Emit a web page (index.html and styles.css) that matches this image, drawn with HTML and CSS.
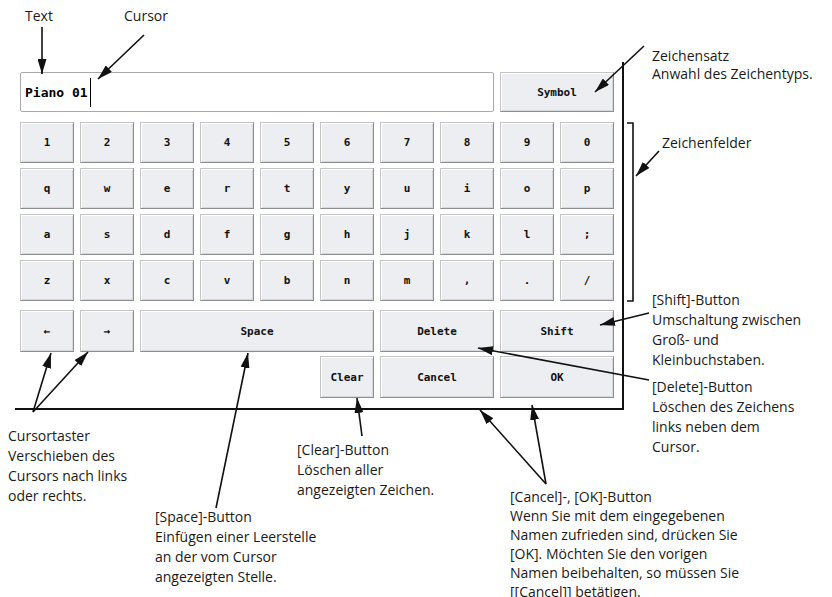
FILE: index.html
```html
<!DOCTYPE html>
<html lang="de">
<head>
    <meta charset="UTF-8">
    <title>Texteingabe</title>
    <link rel="stylesheet" href="styles.css">
</head>
<body>
    <div class="stage">
        <div class="frame">
            <div class="entry-row">
                <div class="entry">
                    <span class="entry-text">Piano 01</span><span class="caret"></span>
                </div>
                <button class="key wide">Symbol</button>
            </div>

            <div class="keys">
                <button class="key">1</button>
                <button class="key">2</button>
                <button class="key">3</button>
                <button class="key">4</button>
                <button class="key">5</button>
                <button class="key">6</button>
                <button class="key">7</button>
                <button class="key">8</button>
                <button class="key">9</button>
                <button class="key">0</button>

                <button class="key">q</button>
                <button class="key">w</button>
                <button class="key">e</button>
                <button class="key">r</button>
                <button class="key">t</button>
                <button class="key">y</button>
                <button class="key">u</button>
                <button class="key">i</button>
                <button class="key">o</button>
                <button class="key">p</button>

                <button class="key">a</button>
                <button class="key">s</button>
                <button class="key">d</button>
                <button class="key">f</button>
                <button class="key">g</button>
                <button class="key">h</button>
                <button class="key">j</button>
                <button class="key">k</button>
                <button class="key">l</button>
                <button class="key">;</button>

                <button class="key">z</button>
                <button class="key">x</button>
                <button class="key">c</button>
                <button class="key">v</button>
                <button class="key">b</button>
                <button class="key">n</button>
                <button class="key">m</button>
                <button class="key">,</button>
                <button class="key">.</button>
                <button class="key">/</button>
            </div>

            <div class="controls">
                <button class="key">&larr;</button>
                <button class="key">&rarr;</button>
                <button class="key space">Space</button>
                <button class="key wide">Delete</button>
                <button class="key wide">Shift</button>

                <button class="key clear">Clear</button>
                <button class="key wide">Cancel</button>
                <button class="key wide">OK</button>
            </div>
        </div>

        <!-- callout arrows -->
        <svg class="arrows" width="832" height="597" viewBox="0 0 832 597">
            <defs>
                <marker id="head" viewBox="0 0 15 9" refX="15" refY="4.5" markerWidth="15" markerHeight="9" orient="auto" markerUnits="userSpaceOnUse">
                    <path d="M0,0 L15,4.5 L0,9 z" fill="#111"/>
                </marker>
            </defs>
            <g stroke="#111" stroke-width="1.6" fill="none">
                <line x1="42" y1="27" x2="42" y2="74" marker-end="url(#head)"/>
                <line x1="144" y1="35" x2="98" y2="79" marker-end="url(#head)"/>
                <line x1="644" y1="46" x2="595" y2="92" marker-end="url(#head)"/>
                <path d="M627,123 H633 V301 H627"/>
                <line x1="659" y1="151" x2="636" y2="176" marker-end="url(#head)"/>
                <line x1="649" y1="313" x2="600" y2="325" marker-end="url(#head)"/>
                <line x1="649" y1="380" x2="478" y2="348" marker-end="url(#head)"/>
                <line x1="33" y1="412" x2="51" y2="353" marker-end="url(#head)"/>
                <line x1="33" y1="412" x2="88" y2="352" marker-end="url(#head)"/>
                <line x1="216" y1="508" x2="248" y2="353" marker-end="url(#head)"/>
                <line x1="362" y1="436" x2="357" y2="398" marker-end="url(#head)"/>
                <line x1="546" y1="484" x2="480" y2="410" marker-end="url(#head)"/>
                <line x1="546" y1="484" x2="532" y2="405" marker-end="url(#head)"/>
            </g>
        </svg>

        <div class="note n-text">Text</div>
        <div class="note n-cursor">Cursor</div>
        <div class="note n-charset">Zeichensatz<br>Anwahl des Zeichentyps.</div>
        <div class="note n-fields">Zeichenfelder</div>
        <div class="note n-shift">[Shift]-Button<br>Umschaltung zwischen<br>Groß- und<br>Kleinbuchstaben.</div>
        <div class="note n-delete">[Delete]-Button<br>Löschen des Zeichens<br>links neben dem<br>Cursor.</div>
        <div class="note n-cursorkeys">Cursortaster<br>Verschieben des<br>Cursors nach links<br>oder rechts.</div>
        <div class="note n-clear">[Clear]-Button<br>Löschen aller<br>angezeigten Zeichen.</div>
        <div class="note n-space">[Space]-Button<br>Einfügen einer Leerstelle<br>an der vom Cursor<br>angezeigten Stelle.</div>
        <div class="note n-cancel">[Cancel]-, [OK]-Button<br>Wenn Sie mit dem eingegebenen<br>Namen zufrieden sind, drücken Sie<br>[OK]. Möchten Sie den vorigen<br>Namen beibehalten, so müssen Sie<br>[[Cancel]] betätigen.</div>
    </div>
</body>
</html>
```

FILE: styles.css
```css
body {
    margin: 0;
    background: #fff;
    font-family: "Open Sans", "Noto Sans", sans-serif;
    color: #1a1a1a;
}

.stage {
    position: relative;
    width: 832px;
    height: 597px;
    overflow: hidden;
}

.frame {
    width: 594px;
    margin: 62px 0 0 15px;
    padding: 10px 8px 10px 5px;
    border-right: 2px solid #111;
    border-bottom: 2px solid #111;
}

.entry-row,
.keys,
.controls {
    display: grid;
    grid-template-columns: repeat(10, 54px);
    column-gap: 6px;
}

.entry-row {
    grid-template-rows: 40px;
    margin-bottom: 10px;
}

.keys {
    grid-template-rows: repeat(4, 41px);
    row-gap: 5px;
}

.controls {
    grid-template-rows: repeat(2, 42px);
    row-gap: 4px;
    margin-top: 9px;
}

.entry {
    grid-column: span 8;
    display: flex;
    align-items: center;
    padding-left: 4px;
    border: 1px solid #a9a9a9;
    border-radius: 2px;
    background: #fff;
}

.entry-text {
    font-family: "DejaVu Sans Mono", monospace;
    font-weight: bold;
    font-size: 13px;
    color: #000;
}

.caret {
    width: 1px;
    height: 29px;
    margin-left: 2px;
    background: #000;
}

.key {
    padding: 0;
    font-family: "DejaVu Sans Mono", monospace;
    font-weight: bold;
    font-size: 11px;
    color: #111;
    background: #eceef2;
    border: 1px solid;
    border-color: #c4c4c4 #8e8e8e #8e8e8e #c4c4c4;
    box-shadow: inset 1px 1px 0 #fff, inset -1px -1px 0 #d6d8dc;
}

.wide {
    grid-column: span 2;
}

.space {
    grid-column: span 4;
}

.clear {
    grid-column: 6;
}

.arrows {
    position: absolute;
    left: 0;
    top: 0;
    pointer-events: none;
}

.note {
    position: absolute;
    font-size: 14px;
    line-height: 20px;
    white-space: nowrap;
}

.n-text { left: 25px; top: 6px; }
.n-cursor { left: 124px; top: 6px; }
.n-charset { left: 652px; top: 47px; line-height: 18px; }
.n-fields { left: 662px; top: 133px; }
.n-shift { left: 652px; top: 290px; }
.n-delete { left: 652px; top: 377px; }
.n-cursorkeys { left: 8px; top: 426px; }
.n-clear { left: 297px; top: 440px; }
.n-space { left: 155px; top: 507px; }
.n-cancel { left: 510px; top: 487px; line-height: 19px; }
```
